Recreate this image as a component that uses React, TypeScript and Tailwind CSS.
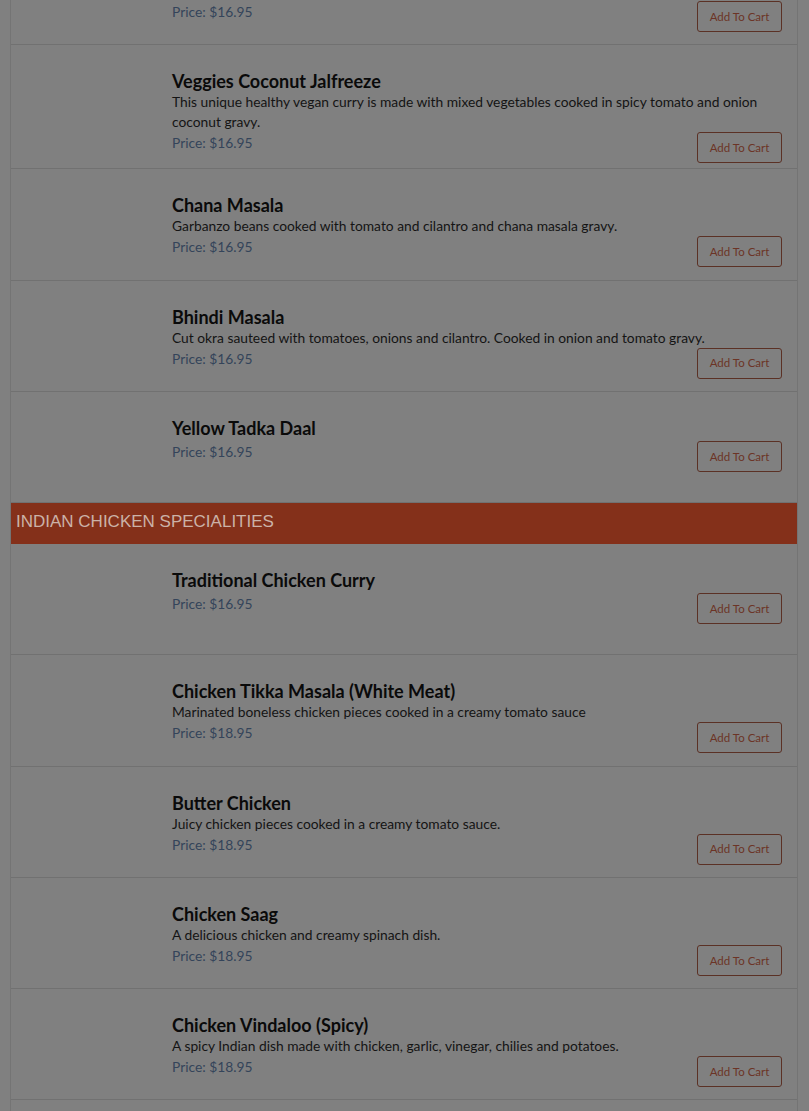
type Dish = {
  name: string;
  desc?: string;
  price: string;
};

const vegTail: Dish[] = [
  {
    name: "Aloo Gobi",
    desc: "Cauliflower and potatoes cooked with onions, tomatoes, ginger, garlic and spices.",
    price: "$16.95",
  },
  {
    name: "Veggies Coconut Jalfreeze",
    desc: "This unique healthy vegan curry is made with mixed vegetables cooked in spicy tomato and onion coconut gravy.",
    price: "$16.95",
  },
  {
    name: "Chana Masala",
    desc: "Garbanzo beans cooked with tomato and cilantro and chana masala gravy.",
    price: "$16.95",
  },
  {
    name: "Bhindi Masala",
    desc: "Cut okra sauteed with tomatoes, onions and cilantro. Cooked in onion and tomato gravy.",
    price: "$16.95",
  },
  { name: "Yellow Tadka Daal", price: "$16.95" },
];

const chicken: Dish[] = [
  { name: "Traditional Chicken Curry", price: "$16.95" },
  {
    name: "Chicken Tikka Masala (White Meat)",
    desc: "Marinated boneless chicken pieces cooked in a creamy tomato sauce",
    price: "$18.95",
  },
  {
    name: "Butter Chicken",
    desc: "Juicy chicken pieces cooked in a creamy tomato sauce.",
    price: "$18.95",
  },
  {
    name: "Chicken Saag",
    desc: "A delicious chicken and creamy spinach dish.",
    price: "$18.95",
  },
  {
    name: "Chicken Vindaloo (Spicy)",
    desc: "A spicy Indian dish made with chicken, garlic, vinegar, chilies and potatoes.",
    price: "$18.95",
  },
  {
    name: "Chicken Korma",
    desc: "Chicken cooked in a mild creamy cashew and onion sauce.",
    price: "$18.95",
  },
];

function DishRow({ dish }: { dish: Dish }) {
  return (
    <div className="flex border-b border-[#717171] py-[5px] pl-[5px] pr-[5px]">
      {/* image placeholder (not loaded) */}
      <div className="h-[100.25px] w-[150px] shrink-0" />
      <div className="ml-[6px] flex-1 pr-[10px] pt-[20px]">
        <h3 className="text-[18px] font-bold leading-[22px] text-[#0a0a0a]">{dish.name}</h3>
        {dish.desc && (
          <p className="text-[13.8px] leading-5 text-[#141414]">{dish.desc}</p>
        )}
        <div className={`flex items-start justify-between ${dish.desc ? "" : "mt-[2px]"}`}>
          <span className="text-[13.8px] leading-[21px] text-[#34445a]">Price: {dish.price}</span>
          <button className="flex h-[31px] w-[85px] items-center justify-center rounded-[3px] border border-[#5b3125] text-[11.5px] text-[#6c3426]">
            Add To Cart
          </button>
        </div>
      </div>
    </div>
  );
}

export default function App() {
  return (
    <div
      className="h-[1111px] overflow-hidden bg-[#808080]"
      style={{ fontFamily: "Lato, 'Noto Sans', sans-serif" }}
    >
      <div className="-mt-[66px] ml-[10px] w-[788px] border-x border-[#747474]">
        {vegTail.map((d) => (
          <DishRow key={d.name} dish={d} />
        ))}
        <div
          className="h-[41px] bg-[#84301a] pl-[5px] pt-[8px] text-[17px] leading-[22px] text-[#cbb2a8]"
          style={{ fontFamily: "'Liberation Sans', Arial, sans-serif" }}
        >
          INDIAN CHICKEN SPECIALITIES
        </div>
        {chicken.map((d) => (
          <DishRow key={d.name} dish={d} />
        ))}
      </div>
    </div>
  );
}
